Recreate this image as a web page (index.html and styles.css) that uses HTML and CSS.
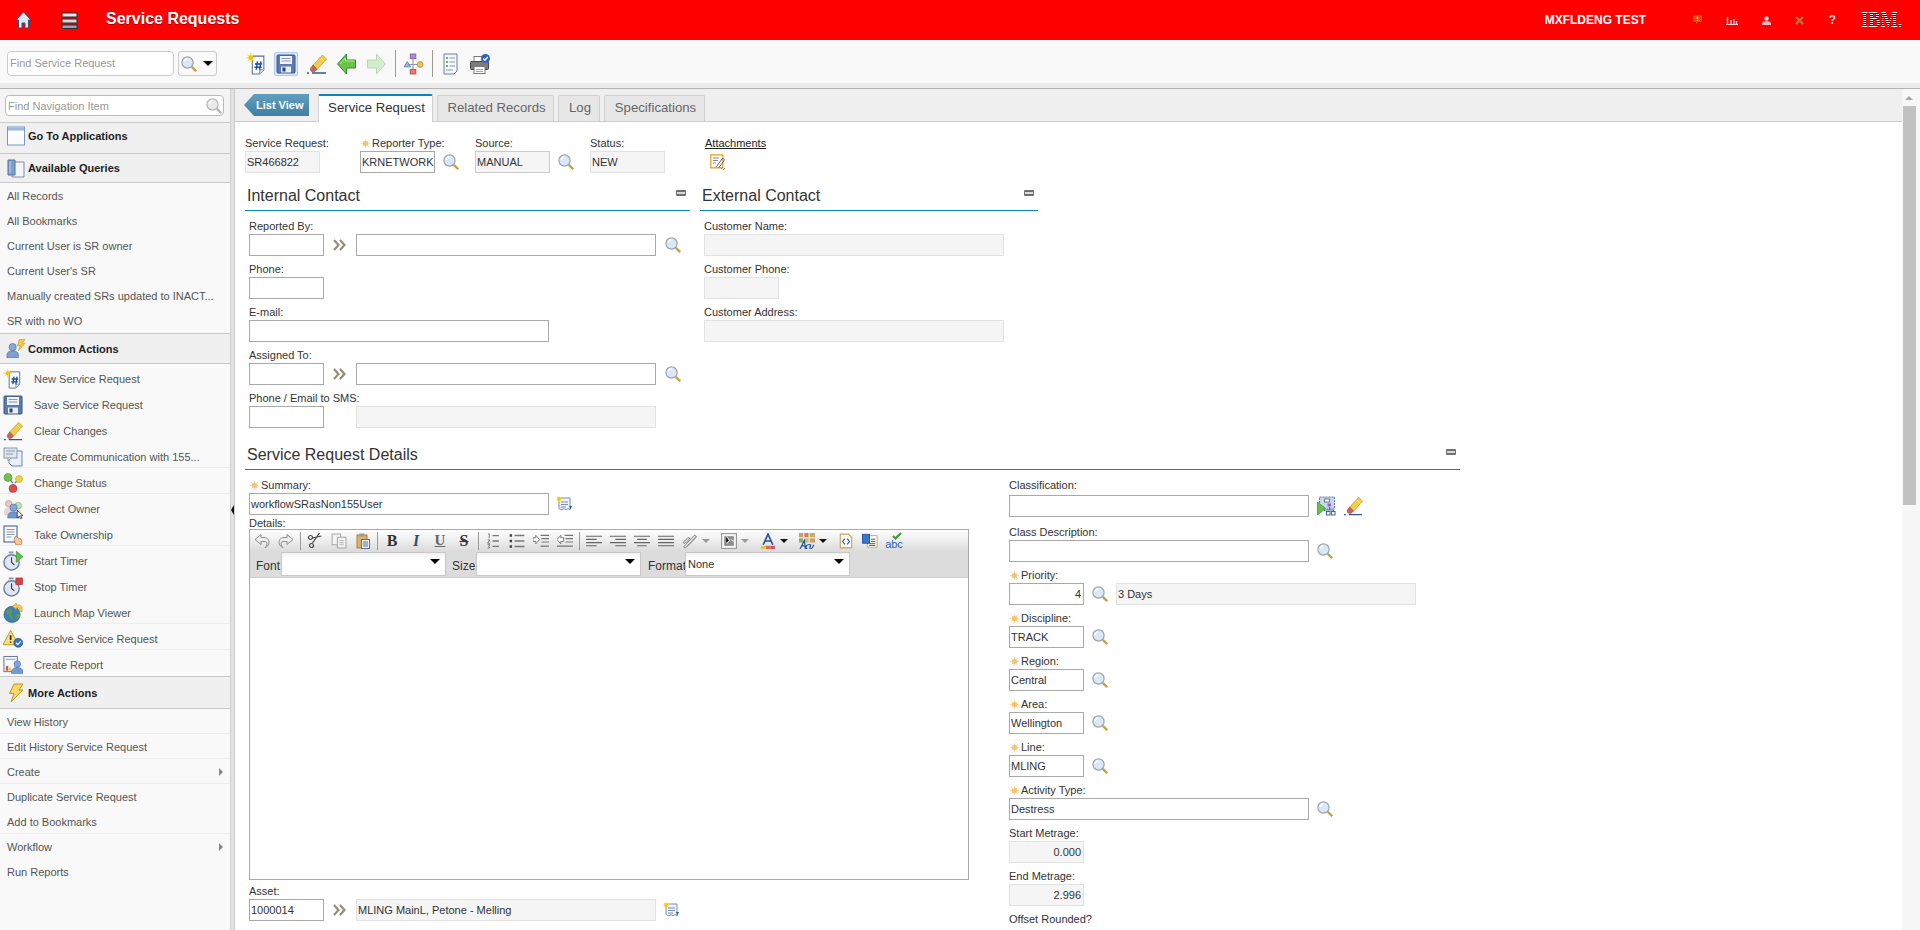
FILE: index.html
```html
<!DOCTYPE html>
<html lang="en">
<head>
  <meta charset="UTF-8" />
  <title>Service Requests</title>
  <link rel="stylesheet" href="styles.css">
</head>
<body>

  <!-- icon sprite -->
  <svg class="sprite" xmlns="http://www.w3.org/2000/svg">
    <symbol id="i-mag" viewBox="0 0 16 16">
      <circle cx="6.500" cy="6.500" r="5.600" fill="#dbe7f4" stroke="#98a5b1" stroke-width="1.200"/>
      <path d="M3.300 6a3.200 3.200 0 0 1 3.200-3.200" fill="none" stroke="#fff" stroke-width="1.400"/>
      <path d="M10.800 10.800l4.400 4.400" stroke="#c7a04c" stroke-width="2.400"/>
    </symbol>
    <symbol id="i-star" viewBox="0 0 10 10">
      <path d="M5 0v10M0 5h10M1.500 1.500l7 7M8.500 1.500l-7 7" stroke="#fcd9a0" stroke-width="1.100"/>
      <circle cx="5" cy="5" r="2.800" fill="#fac06a"/>
    </symbol>
    <symbol id="i-chev" viewBox="0 0 13 12">
      <path d="M1 1l4.500 5L1 11M7 1l4.500 5L7 11" fill="none" stroke="#978d78" stroke-width="2.200"/>
    </symbol>
    <symbol id="i-min" viewBox="0 0 10 6">
      <rect width="10" height="6" rx="1" fill="#6f6f6f"/>
      <rect x="1" y="2" width="8" height="2" fill="#d8d8d8"/>
    </symbol>
    <symbol id="i-new" viewBox="0 0 20 21">
      <path d="M6 3h11v13l-4 4H6z" fill="#fff" stroke="#5b6f95"/>
      <path d="M13 20v-4h4" fill="#d5def0" stroke="#8a9ab8"/>
      <path d="M11 8l-1.200 8M14.200 8L13 16M8.500 10.500h7M8 13.500h7" stroke="#1c4f9e" stroke-width="1.400" fill="none"/>
      <path d="M4.500 0v9M0 4.500h9M1.500 1.500l6 6M7.500 1.500l-6 6" stroke="#ffd84a" stroke-width="1"/>
      <circle cx="4.500" cy="4.500" r="2.300" fill="#f8c400"/>
    </symbol>
    <symbol id="i-save" viewBox="0 0 20 20">
      <rect x="1" y="1" width="18" height="18" rx="1" fill="#5d7bb0" stroke="#3b5484"/>
      <rect x="4" y="2" width="12" height="8" fill="#f3f5f9"/>
      <path d="M5.500 4.500h9M5.500 7h9" stroke="#8a9ab8"/>
      <rect x="5" y="12.500" width="10" height="6" fill="#e9edf4"/>
      <rect x="6.500" y="13.500" width="3" height="4" fill="#2e4674"/>
    </symbol>
    <symbol id="i-eraser" viewBox="0 0 21 20">
      <path d="M7 11L16.500 1l4 4L11 15.500z" fill="#f4cc45" stroke="#b98f22" stroke-width=".7"/>
      <path d="M15 4l3.500 3.500" stroke="#fff2b0"/>
      <path d="M7 11l4 4.500-2.500 2c-2.500 1-4.500-.5-4-3z" fill="#c9645e" stroke="#94413d" stroke-width=".6"/>
      <path d="M1 19h2M6 19h14" stroke="#39558f" stroke-width="1.300"/>
    </symbol>
    <symbol id="i-back" viewBox="0 0 20 22">
      <path d="M1 11L10 1v6h9v8h-9v6z" fill="#6cc24a" stroke="#2f8a2a"/>
      <path d="M3.500 11L9 5v3h9" fill="none" stroke="#b8ea9f"/>
    </symbol>
    <symbol id="i-fwd" viewBox="0 0 20 22">
      <path d="M19 11L10 1v6H1v8h9v6z" fill="#d3eccb" stroke="#b6d8ae"/>
    </symbol>
    <symbol id="i-flow" viewBox="0 0 21 23">
      <path d="M10 6v12M4 12h13" stroke="#8f8f8f"/>
      <rect x="7" y="1" width="6" height="5" fill="#b28ad8" stroke="#6b4c97" stroke-width=".7"/>
      <path d="M4 9l3.500 5.500H.5z" fill="#8fb6e6" stroke="#49719f" stroke-width=".7"/>
      <circle cx="17.500" cy="12" r="3" fill="#f2c05f" stroke="#a77e22" stroke-width=".7"/>
      <rect x="7" y="17" width="6" height="5" fill="#e87870" stroke="#a33d36" stroke-width=".7"/>
    </symbol>
    <symbol id="i-list" viewBox="0 0 15 22">
      <path d="M1 1h13v17l-3 3H1z" fill="#f4f7fb" stroke="#6d80a0"/>
      <path d="M3 5h2M3 9h2M3 13h2" stroke="#3f9a3a" stroke-width="1.500"/>
      <path d="M6.500 5H12M6.500 9H12M6.500 13H12M3 17h7" stroke="#8c9ab0"/>
    </symbol>
    <symbol id="i-print" viewBox="0 0 21 21">
      <rect x="4" y="3" width="10" height="6" fill="#fff" stroke="#777"/>
      <rect x="0.500" y="8" width="18" height="8" rx="1" fill="#7a7c80" stroke="#44464a"/>
      <rect x="4" y="13" width="11" height="7" fill="#fff" stroke="#777"/>
      <path d="M6 16h7M6 18h7" stroke="#aaa"/>
      <circle cx="15.500" cy="5" r="4.500" fill="#2a63c0"/>
      <path d="M13.200 5l1.700 1.700 2.800-3.200" fill="none" stroke="#fff" stroke-width="1.300"/>
    </symbol>
    <symbol id="i-app" viewBox="0 0 18 20">
      <rect x="0.500" y="1" width="17" height="18" fill="#fbfcfe" stroke="#7c98c0"/>
      <rect x="1" y="1.500" width="16" height="3" fill="#9ab8de"/>
    </symbol>
    <symbol id="i-query" viewBox="0 0 18 20">
      <path d="M5 4h12v15H5z" fill="#f1f4f9" stroke="#7e8da6"/>
      <path d="M1 2h7v15H1z" fill="#7f9fcd" stroke="#54709a"/>
      <path d="M3 3v12" stroke="#c4d4ea"/>
    </symbol>
    <symbol id="i-common" viewBox="0 0 21 20">
      <circle cx="7" cy="8" r="3.800" fill="#8aa9d6" stroke="#50709f" stroke-width=".7"/>
      <path d="M1 19v-3c0-3 3-4 6-4s6 1 6 4v3z" fill="#7e9fd0" stroke="#50709f" stroke-width=".7"/>
      <path d="M14 0h6l-3 4h3l-7 8 2-5.500h-3z" fill="#f6cb45" stroke="#b98f22" stroke-width=".6"/>
    </symbol>
    <symbol id="i-bolt" viewBox="0 0 16 20">
      <path d="M6 1h9l-4 6h4L3 19l3-8.500H1.500z" fill="#f8d963" stroke="#bb9326"/>
    </symbol>
    <symbol id="i-comm" viewBox="0 0 20 20">
      <path d="M6 4h13v15H9l-3-3z" fill="#e9eff8" stroke="#6f86ac"/>
      <rect x="1" y="1" width="13" height="10" fill="#dfe6f0" stroke="#8a99ae"/>
      <path d="M3 4h9M3 7h7" stroke="#8a99ae"/>
      <path d="M5 11v3l3-3" fill="#dfe6f0" stroke="#8a99ae"/>
    </symbol>
    <symbol id="i-status" viewBox="0 0 20 20">
      <path d="M7 7l3 3M15 7l-3 3M10 11v2" stroke="#5077b5" stroke-width="1.300"/>
      <circle cx="5" cy="4.500" r="4" fill="#74c04b" stroke="#3f8a2a" stroke-width=".5"/>
      <circle cx="16" cy="6" r="3.500" fill="#f3d23f" stroke="#b3951b" stroke-width=".5"/>
      <circle cx="10" cy="15.500" r="4" fill="#d8504d" stroke="#98302d" stroke-width=".5"/>
    </symbol>
    <symbol id="i-owner" viewBox="0 0 21 21">
      <circle cx="6" cy="5" r="3.500" fill="#efc4c4" stroke="#c28d8d" stroke-width=".6"/>
      <circle cx="16" cy="7" r="3.500" fill="#bfe0b5" stroke="#83aa78" stroke-width=".6"/>
      <path d="M1 14c0-3 2-5 5-5l8 1c3 0 5 2 5 5v2H1z" fill="#e7d6d6"/>
      <circle cx="11" cy="9" r="3.800" fill="#7fa5da" stroke="#4a6ea3" stroke-width=".6"/>
      <path d="M5 20v-2c0-3 3-4.500 6-4.500s6 1.500 6 4.500v2z" fill="#6f96d0" stroke="#4a6ea3" stroke-width=".6"/>
      <path d="M15 12v8l2-2 2 3 1-.5-1.500-3H21z" fill="#fff" stroke="#111" stroke-width=".7"/>
    </symbol>
    <symbol id="i-take" viewBox="0 0 20 20">
      <rect x="1" y="1" width="13" height="16" fill="#f7f9fc" stroke="#3f5688"/>
      <path d="M3.500 4.500h8M3.500 7h8M3.500 9.500h8M3.500 12h5" stroke="#8a98ae"/>
      <path d="M12 12l1-1 2 2 3 1 1 3-1 3h-5l-2-5z" fill="#f5c79b" stroke="#a8734a" stroke-width=".7"/>
    </symbol>
    <symbol id="i-start" viewBox="0 0 21 21">
      <rect x="6" y="0.500" width="5" height="2" fill="#8c98a9"/>
      <circle cx="9" cy="12" r="8" fill="#dfe6f1" stroke="#6e80a0" stroke-width="1.500"/>
      <path d="M9 6.500V12l3 2.500" fill="none" stroke="#333" stroke-width="1.100"/>
      <path d="M14 0l7 6-7 6z" fill="#5fbf48" stroke="#2f8a2a" stroke-width=".6"/>
    </symbol>
    <symbol id="i-stop" viewBox="0 0 21 21">
      <rect x="6" y="0.500" width="5" height="2" fill="#8c98a9"/>
      <circle cx="9" cy="12" r="8" fill="#dfe6f1" stroke="#6e80a0" stroke-width="1.500"/>
      <path d="M9 6.500V12l3 2.500" fill="none" stroke="#333" stroke-width="1.100"/>
      <rect x="13.500" y="1" width="7" height="7" fill="#d3474a" stroke="#99282b" stroke-width=".6"/>
    </symbol>
    <symbol id="i-map" viewBox="0 0 21 21">
      <circle cx="9.500" cy="12" r="8.500" fill="#3f7fb3" stroke="#2b5c88" stroke-width=".7"/>
      <path d="M4 8l4-2 2 3-2 3 3 2-1 4-3-3-1-3-3-1zM13 12l4-1 1 2-3 4-2-1z" fill="#5a9a55"/>
      <path d="M20 9V5c0-2-2-3-4-3h-2V0l-4 3.500L14 7V5h2c1 0 1 .5 1 1v3z" fill="#f5cf55" stroke="#b08d1f" stroke-width=".6"/>
    </symbol>
    <symbol id="i-resolve" viewBox="0 0 21 20">
      <path d="M8 1l8 15H0z" fill="#fbe27b" stroke="#b79517"/>
      <path d="M8 6v5M8 12.500v1.500" stroke="#222" stroke-width="1.700"/>
      <circle cx="16" cy="14" r="4.700" fill="#3a72c8" stroke="#1f4c92" stroke-width=".7"/>
      <path d="M13.500 14l2 2 3-3.500" fill="none" stroke="#fff" stroke-width="1.300"/>
    </symbol>
    <symbol id="i-report" viewBox="0 0 21 20">
      <rect x="1" y="1" width="14" height="16" fill="#fafbfd" stroke="#5a6f95"/>
      <path d="M3 4h10" stroke="#8a98ae"/>
      <rect x="3" y="11" width="2.500" height="5" fill="#d8504d"/>
      <rect x="6" y="13" width="2.500" height="3" fill="#f0c13f"/>
      <circle cx="15" cy="9" r="3.500" fill="#80a7dc" stroke="#4a6ea3" stroke-width=".6"/>
      <path d="M9 19v-2c0-3 3-4.500 6-4.500s6 1.500 6 4.500v2z" fill="#739ad3" stroke="#4a6ea3" stroke-width=".6"/>
    </symbol>
    <symbol id="i-detail" viewBox="0 0 17 16">
      <path d="M3 2h11v12l-2-1.500L10 14l-2-1.500L6 14l-3-1.500z" fill="#eef2f9" stroke="#7d8fb0"/>
      <path d="M5 6h7M5 8.500h7M5 11h5" stroke="#7d8fb0"/>
      <path d="M3 0v6M0 3h6M1 1l4 4M5 1L1 5" stroke="#ffdc55"/>
      <circle cx="3" cy="3" r="1.700" fill="#f6c400"/>
      <path d="M13 10h3l-1.500 3.500z" fill="#2a5fb8"/>
    </symbol>
    <symbol id="i-attach" viewBox="0 0 16 17">
      <path d="M.8.8h12v13H.8z" fill="#fffdf7" stroke="#e49c20" stroke-width="1.200"/>
      <path d="M3 4h6M3 6.500h5M3 9h3" stroke="#8b8b8b"/>
      <path d="M6 13l6-8c1-1.300 3 .2 2 1.700L8.500 14" fill="none" stroke="#666"/>
      <path d="M11 15l2-2M13 16l2-2" stroke="#888"/>
    </symbol>
    <symbol id="i-class" viewBox="0 0 19 20">
      <rect x="3" y="1" width="15" height="12" fill="#c5d9ee" stroke="#5f7fa8" stroke-dasharray="2 1"/>
      <rect x="8" y="3" width="5" height="3" fill="#fff" stroke="#777"/>
      <rect x="11" y="7.500" width="3.500" height="3" fill="#a65bd6"/>
      <path d="M13 11v3M8 15v-1h9v1" fill="none" stroke="#4a6ea3"/>
      <rect x="10" y="15.500" width="3.500" height="3.500" fill="#fff" stroke="#3d64a0"/>
      <rect x="15" y="15.500" width="3.500" height="3.500" fill="#fff" stroke="#3d64a0"/>
      <path d="M1 6l8 6.500L1 19z" fill="#66c24f" stroke="#2f8a2a" stroke-width=".7"/>
    </symbol>
    <symbol id="i-home" viewBox="0 0 17 18">
      <path d="M8.500 1L1 9h2.500v8H7v-5h3v5h3.500V9H16z" fill="#dbe8fa" stroke="#33537f" stroke-width="1"/>
    </symbol>
    <symbol id="i-menu" viewBox="0 0 17 17">
      <rect x="1" y="1" width="15" height="4" fill="#e7e7e7" stroke="#2b2b2b"/>
      <rect x="1" y="7" width="15" height="4" fill="#d8d8d8" stroke="#2b2b2b"/>
      <rect x="1" y="13" width="15" height="3.500" fill="#8aa9c9" stroke="#2b2b2b"/>
    </symbol>
    <symbol id="i-alert" viewBox="0 0 9 10">
      <path d="M1 0h7a1 1 0 0 1 1 1v5a1 1 0 0 1-1 1H5L3 9.500V7H1a1 1 0 0 1-1-1V1a1 1 0 0 1 1-1z" fill="#e04a0a"/>
      <path d="M4.500 1.500v2.500M4.500 5v1" stroke="#fff" stroke-width="1.200"/>
    </symbol>
    <symbol id="i-chart" viewBox="0 0 12 9">
      <path d="M0 8.500h12" stroke="#f6d2dc"/>
      <path d="M1.500 1v7M5 4v4M8 3v5M10.500 5v3" stroke="#f6c6d2" stroke-width="1.400"/>
    </symbol>
    <symbol id="i-user" viewBox="0 0 9 9">
      <circle cx="4.500" cy="2.500" r="2.200" fill="#f7cdd4"/>
      <path d="M0 9V7.500C0 6 2 5 4.500 5S9 6 9 7.500V9z" fill="#f4b8c2"/>
    </symbol>
    <symbol id="i-close" viewBox="0 0 9 9">
      <path d="M1 1l7 7M8 1L1 8" stroke="#cf6a3a" stroke-width="2.400"/>
    </symbol>
    <symbol id="i-undo" viewBox="0 0 16 15">
      <path d="M1 6l6-5v3h3c4 0 5 3 5 5s-2 5-4 5c1-1 2-2 2-4s-2-2-3-2H7v3z" fill="#eee" stroke="#8c8c8c"/>
    </symbol>
    <symbol id="i-redo" viewBox="0 0 16 15">
      <path d="M15 6L9 1v3H6C2 4 1 7 1 9s2 5 4 5c-1-1-2-2-2-4s2-2 3-2h3v3z" fill="#eee" stroke="#8c8c8c"/>
    </symbol>
    <symbol id="i-cut" viewBox="0 0 15 16">
      <path d="M12 0L5 10M14 3L5 5" fill="none" stroke="#444" stroke-width="1.200"/>
      <circle cx="3" cy="4.500" r="2" fill="none" stroke="#444" stroke-width="1.200"/>
      <circle cx="4" cy="12.500" r="2" fill="none" stroke="#444" stroke-width="1.200"/>
    </symbol>
    <symbol id="i-copy" viewBox="0 0 15 15">
      <rect x="1" y="1" width="8" height="10" fill="#f4f4f4" stroke="#aaa"/>
      <rect x="6" y="4" width="8" height="10" fill="#f4f4f4" stroke="#aaa"/>
      <path d="M8 7h4M8 9h4M8 11h4" stroke="#bbb"/>
    </symbol>
    <symbol id="i-paste" viewBox="0 0 14 16">
      <rect x="1" y="2" width="10" height="13" fill="#dcb36a" stroke="#a5813f"/>
      <rect x="3.500" y="0.500" width="5" height="3" fill="#9a9a9a"/>
      <rect x="5.500" y="6.500" width="8" height="9" fill="#eef2f9" stroke="#5a6f95"/>
      <path d="M7 9h5M7 11h5M7 13h5" stroke="#5a6f95"/>
    </symbol>
    <symbol id="i-ol" viewBox="0 0 11 15">
      <path d="M5 2.500h6M5 7.500h6M5 12.500h6" stroke="#777" stroke-width="1.200"/>
      <path d="M1 1l1-.5V5M.5 6.500h2l-2 3h2.300M.5 11h2l-1 1.500 1 1.500h-2" fill="none" stroke="#555" stroke-width=".7"/>
    </symbol>
    <symbol id="i-ul" viewBox="0 0 12 13">
      <path d="M4 2h8M4 6.500h8M4 11h8" stroke="#777" stroke-width="1.200"/>
      <path d="M0 2h2M0 6.500h2M0 11h2" stroke="#444" stroke-width="2"/>
    </symbol>
    <symbol id="i-outdent" viewBox="0 0 17 15">
      <path d="M0 4h3V1.500L7 6l-4 4.500V8H0z" fill="#fff" stroke="#555" stroke-width=".8"/>
      <path d="M8 1.500h9M9 5h8M9 8.500h8M8 13h9" stroke="#777" stroke-width="1.200"/>
    </symbol>
    <symbol id="i-indent" viewBox="0 0 17 15">
      <path d="M7 4H4V1.500L0 6l4 4.500V8h3z" fill="#fff" stroke="#555" stroke-width=".8"/>
      <path d="M8 1.500h9M9 5h8M9 8.500h8M0 13h17" stroke="#777" stroke-width="1.200"/>
    </symbol>
    <symbol id="i-left" viewBox="0 0 15 11">
      <path d="M0 1h15M0 4h10M0 7h15M0 10h10" stroke="#666"/>
    </symbol>
    <symbol id="i-right" viewBox="0 0 15 11">
      <path d="M0 1h15M5 4h10M0 7h15M5 10h10" stroke="#666"/>
    </symbol>
    <symbol id="i-center" viewBox="0 0 15 11">
      <path d="M0 1h15M3 4h9M0 7h15M3 10h9" stroke="#666"/>
    </symbol>
    <symbol id="i-justify" viewBox="0 0 15 11">
      <path d="M0 1h15M0 4h15M0 7h15M0 10h15" stroke="#666"/>
    </symbol>
    <symbol id="i-link" viewBox="0 0 16 15">
      <path d="M2 13L12 2c1-1 3 1 2 2L4 14c-1 1-3 0-2-1zM5 13l9-10" fill="#e6e6e6" stroke="#8a8a8a"/>
      <path d="M1 9l5-5 2 1-5 5z" fill="#d8d8d8" stroke="#8a8a8a"/>
    </symbol>
    <symbol id="i-image" viewBox="0 0 15 15">
      <rect x="0.500" y="0.500" width="14" height="14" fill="#f3f3f3" stroke="#999"/>
      <rect x="3" y="3" width="9" height="9" fill="#8c8c8c"/>
      <path d="M5 3l3 4-3 3M9 6l3 2" stroke="#ddd"/>
    </symbol>
    <symbol id="i-color" viewBox="0 0 13 15">
      <path d="M2 11L6.500 1 11 11M3.800 7.500h5.400" fill="none" stroke="#1f4f9e" stroke-width="1.500"/>
      <rect x="0" y="12" width="4.500" height="3" fill="#e6c74a"/>
      <rect x="4.500" y="12" width="4.500" height="3" fill="#e07040"/>
      <rect x="9" y="12" width="4" height="3" fill="#c8547a"/>
    </symbol>
    <symbol id="i-table" viewBox="0 0 15 15">
      <path d="M0 0h4v4H0z" fill="#c9a06a"/><path d="M5 0h4v4H5z" fill="#d87a6a"/><path d="M10 0h5v4h-5z" fill="#b9b36a"/>
      <path d="M0 5h4v4H0z" fill="#8aa867"/><path d="M5 5h4v4H5z" fill="#c9c06a"/><path d="M10 5h5v4h-5z" fill="#d89a6a"/>
      <path d="M1 15L5 7l1 8M3 12h3M8 15c-2 0-2-4 1-4h2l-1 4M11 15c1 0 2-2 3-4" fill="none" stroke="#1f4f9e" stroke-width="1.100"/>
    </symbol>
    <symbol id="i-source" viewBox="0 0 12 14">
      <path d="M1 1h7l3 3v9H1z" fill="#fffdf6" stroke="#c9a25a"/>
      <path d="M5 5L3 7.500 5 10M7 5l2 2.500L7 10" fill="none" stroke="#2a5fb8"/>
    </symbol>
    <symbol id="i-word" viewBox="0 0 18 16">
      <rect x="6" y="2" width="11" height="13" fill="#fffdf6" stroke="#c9a25a"/>
      <path d="M10 6h5M10 8.500h5M8 11h7M8 13h7" stroke="#1f4f9e"/>
      <rect x="0.500" y="0.500" width="8" height="10" fill="#3a76c8" stroke="#1f4f9e"/>
    </symbol>
    <symbol id="i-spell" viewBox="0 0 16 15">
      <path d="M7 4l2.500 2.500L15 1" fill="none" stroke="#3f9a3a" stroke-width="2.200"/>
    </symbol>
  </svg>

  <header class="topbar">
    <svg class="home-icon"><use href="#i-home"/></svg>
    <svg class="menu-icon"><use href="#i-menu"/></svg>
    <div class="app-title">Service Requests</div>
    <div class="top-user">MXFLDENG TEST</div>
    <svg class="top-ico alert-ico"><use href="#i-alert"/></svg>
    <svg class="top-ico chart-ico"><use href="#i-chart"/></svg>
    <svg class="top-ico user-ico"><use href="#i-user"/></svg>
    <svg class="top-ico close-ico"><use href="#i-close"/></svg>
    <span class="help-ico">?</span>
    <div class="ibm-logo">IBM.</div>
  </header>

  <div class="toolbar">
    <div class="find-box">Find Service Request</div>
    <div class="find-btn">
      <svg class="i16"><use href="#i-mag"/></svg>
      <span class="caret"></span>
    </div>
    <div class="tb-btn first"><svg class="tb-ico"><use href="#i-new"/></svg></div>
    <div class="tb-btn"><span class="tb-active"><svg class="i20"><use href="#i-save"/></svg></span></div>
    <div class="tb-btn"><svg class="tb-ico"><use href="#i-eraser"/></svg></div>
    <div class="tb-btn"><svg class="tb-ico"><use href="#i-back"/></svg></div>
    <div class="tb-btn"><svg class="tb-ico"><use href="#i-fwd"/></svg></div>
    <div class="tb-sep"></div>
    <div class="tb-btn"><svg class="tb-ico"><use href="#i-flow"/></svg></div>
    <div class="tb-sep"></div>
    <div class="tb-btn"><svg class="tb-ico"><use href="#i-list"/></svg></div>
    <div class="tb-btn"><svg class="tb-ico"><use href="#i-print"/></svg></div>
  </div>
  <div class="toolbar-edge"></div>

  <div class="workspace">
    <aside class="sidebar">
      <div class="nav-find">
        <div class="nav-input">
          <span>Find Navigation Item</span>
          <svg class="i16"><use href="#i-mag"/></svg>
        </div>
      </div>

      <div class="side-head first"><svg class="i20"><use href="#i-app"/></svg>Go To Applications</div>
      <div class="side-head short"><svg class="i20"><use href="#i-query"/></svg>Available Queries</div>
      <div class="side-row">All Records</div>
      <div class="side-row">All Bookmarks</div>
      <div class="side-row">Current User is SR owner</div>
      <div class="side-row">Current User's SR</div>
      <div class="side-row">Manually created SRs updated to INACT...</div>
      <div class="side-row">SR with no WO</div>

      <div class="side-head"><svg class="i20"><use href="#i-common"/></svg>Common Actions</div>
      <div class="action-row"><svg class="i20"><use href="#i-new"/></svg>New Service Request</div>
      <div class="action-row"><svg class="i20"><use href="#i-save"/></svg>Save Service Request</div>
      <div class="action-row"><svg class="i20"><use href="#i-eraser"/></svg>Clear Changes</div>
      <div class="action-row sep"><svg class="i20"><use href="#i-comm"/></svg>Create Communication with 155...</div>
      <div class="action-row sep"><svg class="i20"><use href="#i-status"/></svg>Change Status</div>
      <div class="action-row"><svg class="i20"><use href="#i-owner"/></svg>Select Owner</div>
      <div class="action-row sep"><svg class="i20"><use href="#i-take"/></svg>Take Ownership</div>
      <div class="action-row"><svg class="i20"><use href="#i-start"/></svg>Start Timer</div>
      <div class="action-row"><svg class="i20"><use href="#i-stop"/></svg>Stop Timer</div>
      <div class="action-row sep"><svg class="i20"><use href="#i-map"/></svg>Launch Map Viewer</div>
      <div class="action-row sep"><svg class="i20"><use href="#i-resolve"/></svg>Resolve Service Request</div>
      <div class="action-row"><svg class="i20"><use href="#i-report"/></svg>Create Report</div>

      <div class="side-head tall"><svg class="i20"><use href="#i-bolt"/></svg>More Actions</div>
      <div class="side-row sep">View History</div>
      <div class="side-row sep">Edit History Service Request</div>
      <div class="side-row sep">Create<span class="sub-arrow"></span></div>
      <div class="side-row">Duplicate Service Request</div>
      <div class="side-row sep">Add to Bookmarks</div>
      <div class="side-row">Workflow<span class="sub-arrow"></span></div>
      <div class="side-row">Run Reports</div>
    </aside>

    <div class="splitter"><span class="split-arrow"></span></div>

    <main class="main">
      <div class="main-column">
        <nav class="tabbar">
          <div class="list-view">List View</div>
          <div class="tab active">Service Request</div>
          <div class="tab related">Related Records</div>
          <div class="tab log">Log</div>
          <div class="tab specs">Specifications</div>
        </nav>

        <div class="page">
          <div class="head-fields">
            <div>
              <div class="label">Service Request:</div>
              <div class="box ro w75">SR466822</div>
            </div>
            <div>
              <div class="label"><svg class="req"><use href="#i-star"/></svg>Reporter Type:</div>
              <div class="with-icon">
                <div class="box w75">KRNETWORK</div>
                <svg class="i16 lookup"><use href="#i-mag"/></svg>
              </div>
            </div>
            <div>
              <div class="label">Source:</div>
              <div class="with-icon">
                <div class="box ro dim w75">MANUAL</div>
                <svg class="i16 lookup"><use href="#i-mag"/></svg>
              </div>
            </div>
            <div>
              <div class="label">Status:</div>
              <div class="box ro w75">NEW</div>
            </div>
            <div>
              <div class="label attach-label">Attachments</div>
              <svg class="attach-ico"><use href="#i-attach"/></svg>
            </div>
          </div>

          <div class="contact-row">
            <section class="internal">
              <div class="section-head">
                <h2>Internal Contact</h2>
                <svg class="min-ico"><use href="#i-min"/></svg>
              </div>
              <div class="section-body">
                <div class="field">
                  <div class="label">Reported By:</div>
                  <div class="with-icon">
                    <div class="box w75"></div>
                    <svg class="chev"><use href="#i-chev"/></svg>
                    <div class="box w300"></div>
                    <svg class="i16 lookup-near"><use href="#i-mag"/></svg>
                  </div>
                </div>
                <div class="field">
                  <div class="label">Phone:</div>
                  <div class="box w75"></div>
                </div>
                <div class="field">
                  <div class="label">E-mail:</div>
                  <div class="box w300"></div>
                </div>
                <div class="field">
                  <div class="label">Assigned To:</div>
                  <div class="with-icon">
                    <div class="box w75"></div>
                    <svg class="chev"><use href="#i-chev"/></svg>
                    <div class="box w300"></div>
                    <svg class="i16 lookup-near"><use href="#i-mag"/></svg>
                  </div>
                </div>
                <div class="field">
                  <div class="label">Phone / Email to SMS:</div>
                  <div class="with-icon">
                    <div class="box w75"></div>
                    <div class="box ro w300 after-chev"></div>
                  </div>
                </div>
              </div>
            </section>

            <section class="external">
              <div class="section-head">
                <h2>External Contact</h2>
                <svg class="min-ico"><use href="#i-min"/></svg>
              </div>
              <div class="section-body">
                <div class="field">
                  <div class="label">Customer Name:</div>
                  <div class="box ro w300"></div>
                </div>
                <div class="field">
                  <div class="label">Customer Phone:</div>
                  <div class="box ro w75"></div>
                </div>
                <div class="field">
                  <div class="label">Customer Address:</div>
                  <div class="box ro w300"></div>
                </div>
              </div>
            </section>
          </div>

          <section class="details">
            <div class="section-head">
              <h2>Service Request Details</h2>
              <svg class="min-ico"><use href="#i-min"/></svg>
            </div>
            <div class="details-body">
              <div class="details-left">
                <div class="label"><svg class="req"><use href="#i-star"/></svg>Summary:</div>
                <div class="with-icon">
                  <div class="box w300">workflowSRasNon155User</div>
                  <svg class="detail-ico"><use href="#i-detail"/></svg>
                </div>
                <div class="label rte-label">Details:</div>

                <div class="rte">
                  <div class="rte-bar">
                    <span class="rte-btn"><svg class="rte-i"><use href="#i-undo"/></svg></span>
                    <span class="rte-btn"><svg class="rte-i"><use href="#i-redo"/></svg></span>
                    <span class="rte-sep"></span>
                    <span class="rte-btn"><svg class="rte-i"><use href="#i-cut"/></svg></span>
                    <span class="rte-btn"><svg class="rte-i"><use href="#i-copy"/></svg></span>
                    <span class="rte-btn"><svg class="rte-i"><use href="#i-paste"/></svg></span>
                    <span class="rte-sep"></span>
                    <span class="rte-btn rte-b">B</span>
                    <span class="rte-btn rte-em">I</span>
                    <span class="rte-btn rte-u">U</span>
                    <span class="rte-btn rte-s">S</span>
                    <span class="rte-sep"></span>
                    <span class="rte-btn"><svg class="rte-i"><use href="#i-ol"/></svg></span>
                    <span class="rte-btn"><svg class="rte-i"><use href="#i-ul"/></svg></span>
                    <span class="rte-btn"><svg class="rte-i"><use href="#i-outdent"/></svg></span>
                    <span class="rte-btn"><svg class="rte-i"><use href="#i-indent"/></svg></span>
                    <span class="rte-sep"></span>
                    <span class="rte-btn"><svg class="rte-i"><use href="#i-left"/></svg></span>
                    <span class="rte-btn"><svg class="rte-i"><use href="#i-right"/></svg></span>
                    <span class="rte-btn"><svg class="rte-i"><use href="#i-center"/></svg></span>
                    <span class="rte-btn"><svg class="rte-i"><use href="#i-justify"/></svg></span>
                    <span class="rte-btn"><svg class="rte-i"><use href="#i-link"/></svg></span>
                    <span class="rte-drop off"></span>
                    <span class="rte-btn after-drop"><svg class="rte-i"><use href="#i-image"/></svg></span>
                    <span class="rte-drop off"></span>
                    <span class="rte-btn after-drop"><svg class="rte-i"><use href="#i-color"/></svg></span>
                    <span class="rte-drop"></span>
                    <span class="rte-btn after-drop"><svg class="rte-i"><use href="#i-table"/></svg></span>
                    <span class="rte-drop"></span>
                    <span class="rte-btn after-drop"><svg class="rte-i"><use href="#i-source"/></svg></span>
                    <span class="rte-btn"><svg class="rte-i"><use href="#i-word"/></svg></span>
                    <span class="rte-btn rte-spell"><svg class="spell-tick"><use href="#i-spell"/></svg>abc</span>
                  </div>
                  <div class="rte-selects">
                    <span class="rte-font">Font</span>
                    <div class="rte-select"><span></span><span class="caret"></span></div>
                    <span class="rte-size">Size</span>
                    <div class="rte-select"><span></span><span class="caret"></span></div>
                    <span class="rte-format">Format</span>
                    <div class="rte-select"><span>None</span><span class="caret"></span></div>
                  </div>
                  <div class="rte-body"></div>
                </div>

                <div class="label asset-label">Asset:</div>
                <div class="with-icon">
                  <div class="box w75">1000014</div>
                  <svg class="chev"><use href="#i-chev"/></svg>
                  <div class="box ro w300">MLING MainL, Petone - Melling</div>
                  <svg class="detail-ico"><use href="#i-detail"/></svg>
                </div>
              </div>

              <div class="details-right">
                <div class="field class-field">
                  <div class="label">Classification:</div>
                  <div class="with-icon">
                    <div class="box w300"></div>
                    <svg class="class-ico"><use href="#i-class"/></svg>
                    <svg class="class-ico"><use href="#i-eraser"/></svg>
                  </div>
                </div>
                <div class="field">
                  <div class="label">Class Description:</div>
                  <div class="with-icon">
                    <div class="box w300"></div>
                    <svg class="i16 lookup"><use href="#i-mag"/></svg>
                  </div>
                </div>
                <div class="field">
                  <div class="label"><svg class="req"><use href="#i-star"/></svg>Priority:</div>
                  <div class="with-icon">
                    <div class="box w75 num">4</div>
                    <svg class="i16 lookup"><use href="#i-mag"/></svg>
                    <div class="box ro w300 after-lookup">3 Days</div>
                  </div>
                </div>
                <div class="field">
                  <div class="label"><svg class="req"><use href="#i-star"/></svg>Discipline:</div>
                  <div class="with-icon">
                    <div class="box w75">TRACK</div>
                    <svg class="i16 lookup"><use href="#i-mag"/></svg>
                  </div>
                </div>
                <div class="field">
                  <div class="label"><svg class="req"><use href="#i-star"/></svg>Region:</div>
                  <div class="with-icon">
                    <div class="box w75">Central</div>
                    <svg class="i16 lookup"><use href="#i-mag"/></svg>
                  </div>
                </div>
                <div class="field">
                  <div class="label"><svg class="req"><use href="#i-star"/></svg>Area:</div>
                  <div class="with-icon">
                    <div class="box w75">Wellington</div>
                    <svg class="i16 lookup"><use href="#i-mag"/></svg>
                  </div>
                </div>
                <div class="field">
                  <div class="label"><svg class="req"><use href="#i-star"/></svg>Line:</div>
                  <div class="with-icon">
                    <div class="box w75">MLING</div>
                    <svg class="i16 lookup"><use href="#i-mag"/></svg>
                  </div>
                </div>
                <div class="field">
                  <div class="label"><svg class="req"><use href="#i-star"/></svg>Activity Type:</div>
                  <div class="with-icon">
                    <div class="box w300">Destress</div>
                    <svg class="i16 lookup"><use href="#i-mag"/></svg>
                  </div>
                </div>
                <div class="field">
                  <div class="label">Start Metrage:</div>
                  <div class="box ro w75 num">0.000</div>
                </div>
                <div class="field">
                  <div class="label">End Metrage:</div>
                  <div class="box ro w75 num">2.996</div>
                </div>
                <div class="field">
                  <div class="label">Offset Rounded?</div>
                </div>
              </div>
            </div>
          </section>
        </div>
      </div>

      <div class="scrollbar">
        <span class="scroll-up"></span>
        <div class="scroll-thumb"></div>
      </div>
    </main>
  </div>

</body>
</html>
```

FILE: styles.css
```css
* {
  box-sizing: border-box;
}

html, body {
  height: 930px;
  overflow: hidden;
}

body {
  margin: 0;
  font-family: 'Liberation Sans', Arial, sans-serif;
  font-size: 11px;
  color: #333;
  background: #fff;
}

.sprite {
  display: none;
}

.i16 { width: 16px; height: 16px; flex: none; }
.i20 { width: 20px; height: 20px; flex: none; }

/* Top bar */
.topbar {
  height: 40px;
  background: #f00;
  display: flex;
  align-items: center;
  color: #fff;
}

.home-icon {
  width: 17px;
  height: 18px;
  margin-left: 15px;
}

.menu-icon {
  width: 17px;
  height: 17px;
  margin-left: 29px;
}

.app-title {
  margin: 0 0 3px 28px;
  font-size: 16px;
  font-weight: bold;
  text-shadow: 0 1px 1px rgba(90,0,0,0.5);
}

.top-user {
  margin-left: auto;
  font-size: 12px;
  font-weight: bold;
}

.top-ico {
  flex: none;
}

.alert-ico { width: 9px; height: 10px; margin-left: 47px; }
.chart-ico { width: 12px; height: 9px; margin-left: 24px; }
.user-ico { width: 9px; height: 9px; margin-left: 24px; }
.close-ico { width: 9px; height: 9px; margin-left: 24px; }

.help-ico {
  width: 9px;
  margin-left: 24px;
  font-size: 12px;
  font-weight: bold;
  color: #f3c6d2;
  text-align: center;
}

/* striped logo: text clipped to a 2px stripe background */
.ibm-logo {
  width: 52px;
  height: 18px;
  margin: 0 7px 0 24px;
  font-family: 'Liberation Serif', serif;
  font-size: 23px;
  font-weight: bold;
  line-height: 18px;
  background: repeating-linear-gradient(#111 0, #111 1px, #f2f2f2 1px, #f2f2f2 2px);
  -webkit-background-clip: text;
  background-clip: text;
  color: transparent;
  transform: scaleX(0.800);
  transform-origin: left center;
  white-space: nowrap;
}

/* Toolbar */
.toolbar {
  height: 43px;
  background: #f9f9f9;
  display: flex;
  align-items: center;
  padding: 4px 0 0 7px;
}

.find-box {
  width: 167px;
  height: 25px;
  background: #fff;
  border: 1px solid #ccc;
  border-radius: 4px;
  color: #999;
  line-height: 23px;
  padding-left: 2px;
}

.find-btn {
  width: 39px;
  height: 25px;
  margin-left: 4px;
  border: 1px solid #ccc;
  border-radius: 3px;
  display: flex;
  align-items: center;
  justify-content: space-between;
  padding: 0 3px 0 2px;
}

.caret {
  width: 0;
  height: 0;
  flex: none;
  border-left: 5px solid transparent;
  border-right: 5px solid transparent;
  border-top: 5px solid #000;
}

.tb-btn {
  width: 30px;
  height: 26px;
  display: flex;
  align-items: center;
  justify-content: center;
  flex: none;
}

.tb-btn.first {
  margin-left: 24px;
}

.tb-ico {
  width: 21px;
  height: 22px;
}

.tb-active {
  width: 24px;
  height: 24px;
  background: #dce9fb;
  border: 1px solid #aecbf0;
  border-radius: 2px;
  display: flex;
  align-items: center;
  justify-content: center;
}

.tb-sep {
  width: 1px;
  height: 27px;
  background: #a39c8c;
  margin: 0 2px 0 4px;
  flex: none;
}

.toolbar-edge {
  height: 6px;
  background: #ececec;
  border-bottom: 1px solid #b3b3b3;
}

.workspace {
  display: flex;
  height: 841px;
}

/* Left navigation */
.sidebar {
  width: 230px;
  flex: none;
  background: #f9f9f9;
  color: #555;
}

.nav-find {
  height: 33px;
  padding: 6px 6px 0 5px;
  background: #f4f4f4;
}

.nav-input {
  height: 21px;
  background: #fff;
  border: 1px solid #bbb;
  border-radius: 4px;
  display: flex;
  align-items: center;
  justify-content: space-between;
  padding: 0 1px 0 2px;
  color: #999;
}

.nav-input svg {
  filter: grayscale(1);
  opacity: 0.8;
}

.side-head {
  height: 31px;
  background: #f0f0f0;
  border-top: 1px solid #c9c9c9;
  display: flex;
  align-items: center;
  padding-left: 6px;
  gap: 2px;
  color: #222;
  font-weight: bold;
}

.side-head.first {
  padding-bottom: 4px;
}

.side-head.short {
  height: 30px;
  padding-bottom: 1px;
}

.side-head.tall {
  height: 33px;
  border-bottom: 1px solid #c9c9c9;
}

.side-head.short,
.side-row + .side-head {
  border-bottom: 1px solid #c9c9c9;
}

.side-row + .side-head {
  padding-top: 1px;
}

.side-row {
  height: 25px;
  line-height: 27px;
  padding-left: 7px;
  position: relative;
  white-space: nowrap;
}

.side-row.sep,
.action-row.sep {
  border-bottom: 1px solid #eee;
}

.action-row {
  height: 26px;
  display: flex;
  align-items: center;
  padding: 4px 0 0 3px;
  white-space: nowrap;
}

.action-row .i20 {
  margin-right: 11px;
}

.sub-arrow {
  position: absolute;
  right: 7px;
  top: 9px;
  width: 0;
  height: 0;
  border-top: 4px solid transparent;
  border-bottom: 4px solid transparent;
  border-left: 4px solid #888;
}

.splitter {
  width: 5px;
  flex: none;
  background: #e2e2e2;
  border-left: 1px solid #cfcfcf;
  border-right: 1px solid #c9c9c9;
  display: flex;
  align-items: center;
}

.split-arrow {
  width: 0;
  height: 0;
  border-top: 5px solid transparent;
  border-bottom: 5px solid transparent;
  border-right: 3px solid #111;
}

/* Main area */
.main {
  flex: 1;
  min-width: 0;
  display: flex;
}

.main-column {
  flex: 1;
  min-width: 0;
}

.tabbar {
  height: 33px;
  background: #efefef;
  border-bottom: 1px solid #ccc;
  padding-left: 9px;
  display: flex;
  align-items: flex-end;
}

.list-view {
  width: 65px;
  height: 22px;
  align-self: flex-start;
  margin-top: 5px;
  margin-right: 9px;
  padding-left: 12px;
  background: linear-gradient(#609fc0, #3f7fa1);
  clip-path: polygon(10px 0, 100% 0, 100% 100%, 10px 100%, 0 50%);
  color: #fff;
  font-weight: bold;
  line-height: 22px;
}

.tab {
  height: 26px;
  margin-right: 4px;
  padding-left: 2px;
  background: #e7e7e7;
  border: 1px solid #d0d0d0;
  border-bottom: 0;
  border-radius: 2px 2px 0 0;
  color: #666;
  font-size: 13.200px;
  line-height: 24px;
  text-align: center;
}

.tab.active {
  width: 115px;
  height: 28px;
  margin-bottom: -1px;
  background: #fff;
  border-top: 2px solid #0a84bd;
  color: #333;
}

.tab.related { width: 117px; }
.tab.log { width: 42px; }
.tab.specs { width: 101px; }

.page {
  padding: 14px 0 0 10px;
  overflow: hidden;
  height: 808px;
}

.label {
  height: 14px;
  line-height: 14px;
  margin-bottom: 1px;
  white-space: nowrap;
  display: flex;
  align-items: center;
}

.req {
  width: 9px;
  height: 9px;
  margin: 0 2px 0 1px;
  flex: none;
}

.box {
  height: 22px;
  background: #fff;
  border: 1px solid #a9a9a9;
  line-height: 20px;
  padding: 0 2px 0 1px;
  color: #333;
  flex: none;
  white-space: nowrap;
  overflow: hidden;
}

.box.ro {
  background: #f5f5f5;
  border-color: #e2e2e2;
}

.box.dim {
  border-color: #ccc;
}

.box.num {
  text-align: right;
}

.w75 { width: 75px; }
.w300 { width: 300px; }

.with-icon {
  display: flex;
  align-items: center;
}

.lookup {
  margin-left: 8px;
}

.lookup-near {
  margin-left: 9px;
}

.after-chev {
  margin-left: 32px;
}

.after-lookup {
  margin-left: 8px;
}

.chev {
  width: 13px;
  height: 12px;
  margin: 0 10px 0 9px;
  flex: none;
}

.head-fields {
  display: grid;
  grid-template-columns: repeat(5, 115px);
}

.attach-label {
  text-decoration: underline;
  color: #222;
}

.attach-ico {
  width: 16px;
  height: 17px;
  margin: 4px 0 0 5px;
  display: block;
}

.contact-row {
  display: flex;
  gap: 10px;
  margin-top: 7px;
}

.internal { width: 445px; }
.external { width: 338px; }

.section-head {
  height: 31px;
  border-bottom: 1px solid #0a84bd;
  display: flex;
  align-items: center;
  justify-content: space-between;
  padding: 0 4px 0 2px;
}

.section-head h2 {
  margin: 0;
  padding-top: 2px;
  font-size: 16px;
  font-weight: normal;
  color: #333;
}

.min-ico {
  width: 10px;
  height: 6px;
  margin-top: -5px;
}

.section-body {
  padding: 8px 0 0 4px;
}

.field {
  margin-bottom: 6px;
}

.details {
  width: 1215px;
  margin-top: 5px;
}

.details-body {
  display: flex;
  padding: 8px 0 0 4px;
}

.details-left {
  width: 720px;
  flex: none;
}

.details-right {
  margin-left: 40px;
}

.class-field .label {
  margin-bottom: 3px;
}

.class-field {
  margin-bottom: 8px;
}

.class-ico {
  width: 20px;
  height: 20px;
  margin-left: 7px;
  flex: none;
}

.detail-ico {
  width: 17px;
  height: 16px;
  margin-left: 7px;
}

.rte-label {
  height: 13px;
  margin: 1px 0 0;
}

/* Rich text editor */
.rte {
  height: 351px;
  border: 1px solid #aaa;
  display: flex;
  flex-direction: column;
}

.rte-bar {
  height: 21px;
  background: linear-gradient(#fff, #dcdcdc);
  display: flex;
  align-items: center;
  flex: none;
}

.rte-btn {
  width: 24px;
  height: 21px;
  display: flex;
  align-items: center;
  justify-content: center;
  flex: none;
}

.rte-i {
  width: 16px;
  height: 16px;
}

.rte-sep {
  width: 1px;
  height: 18px;
  background: #999;
  margin: 0 2px;
  flex: none;
}

.rte-drop {
  width: 0;
  height: 0;
  flex: none;
  border-left: 4px solid transparent;
  border-right: 4px solid transparent;
  border-top: 4px solid #111;
}

.rte-drop.off {
  border-top-color: #999;
}

.after-drop {
  margin-left: 7px;
}

.rte-b {
  font: bold 16px 'Liberation Serif', serif;
  color: #333;
}

.rte-em {
  font: italic bold 16px 'Liberation Serif', serif;
  color: #2f4f6f;
}

.rte-u {
  font: bold 15px 'Liberation Serif', serif;
  color: #666;
  text-decoration: underline;
}

.rte-s {
  font: bold 16px 'Liberation Serif', serif;
  color: #333;
  text-decoration: line-through;
}

.rte-spell {
  position: relative;
  font-size: 11px;
  color: #2a5fb8;
  padding-top: 6px;
}

.spell-tick {
  position: absolute;
  left: 4px;
  top: 2px;
  width: 16px;
  height: 15px;
}

.rte-selects {
  height: 26px;
  background: #dcdcdc;
  display: flex;
  align-items: center;
  flex: none;
  font-size: 12px;
}

.rte-font,
.rte-size,
.rte-format {
  margin-top: 3px;
  flex: none;
}

.rte-font { margin-left: 6px; margin-right: 3px; width: 22px; }
.rte-size { margin-left: 6px; margin-right: 3px; width: 21px; }
.rte-format { margin-left: 7px; margin-right: 3px; width: 34px; }

.rte-select {
  width: 165px;
  height: 24px;
  background: linear-gradient(#f2f2f2, #fff 6px);
  border: 1px solid #c8c8c8;
  display: flex;
  justify-content: space-between;
  padding: 5px 5px 0 2px;
  font-size: 11px;
  flex: none;
}

.rte-select .caret {
  margin-top: 1px;
}

.rte-body {
  flex: 1;
  background: #fff;
  border-top: 1px solid #c8c8c8;
}

.asset-label {
  margin-top: 4px;
}

/* Scrollbar */
.scrollbar {
  width: 18px;
  flex: none;
  background: #f7f7f7;
  padding-left: 1px;
  position: relative;
}

.scroll-up {
  position: absolute;
  left: 3px;
  top: 7px;
  width: 0;
  height: 0;
  border-left: 4px solid transparent;
  border-right: 4px solid transparent;
  border-bottom: 4px solid #a8a8a8;
}

.scroll-thumb {
  width: 13px;
  height: 399px;
  margin-top: 17px;
  background: #c1c1c1;
}
```
